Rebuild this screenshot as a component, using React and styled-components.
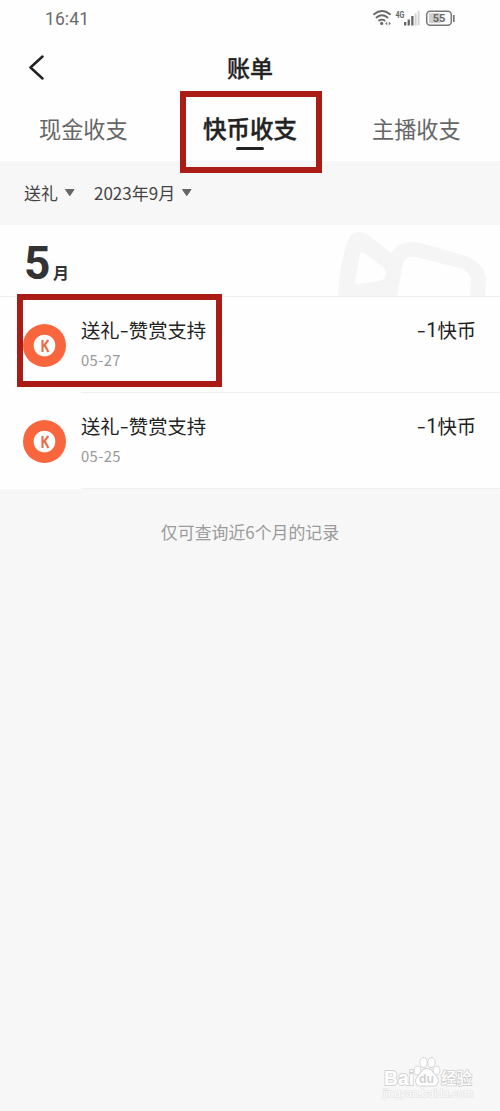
import React from "react";
import styled, { createGlobalStyle } from "styled-components";

const GlobalStyle = createGlobalStyle`
  * { box-sizing: border-box; }
  body { margin: 0; background: #f7f7f7; }
`;

const Screen = styled.div`
  position: relative;
  width: 500px;
  height: 1111px;
  overflow: hidden;
  background: #f7f7f7;
  color: #222;
  font-family: "Noto Sans CJK SC", sans-serif;
  white-space: nowrap;
`;

const StatusBar = styled.div`
  display: flex;
  justify-content: space-between;
  align-items: center;
  height: 38px;
  padding: 0 44px 0 45px;
  background: #fefefe;
`;

const Clock = styled.span`
  font: 400 17.5px/24px Roboto, "Noto Sans", sans-serif;
  letter-spacing: 0.1px;
  color: #6b6b6b;
`;

const NavBar = styled.header`
  display: grid;
  grid-template-columns: 60px 1fr 60px;
  align-items: center;
  height: 59px;
  background: #fefefe;
`;

const BackButton = styled.button`
  display: flex;
  padding: 0 0 0 28px;
  border: 0;
  background: none;
`;

const Title = styled.h1`
  margin: 0;
  padding-bottom: 2px;
  font-size: 23px;
  line-height: 30px;
  font-weight: 500;
  -webkit-text-stroke: 0.3px #222;
  text-align: center;
`;

const Tabs = styled.nav`
  display: flex;
  justify-content: space-between;
  height: 64px;
  padding: 15px 39px 0;
  background: #fefefe;
`;

const Tab = styled.div`
  position: relative;
  width: ${(p) => (p.$active ? "94px" : "89px")};
  font-size: ${(p) => (p.$active ? "23.5px" : "22.2px")};
  line-height: 32px;
  font-weight: ${(p) => (p.$active ? 500 : 400)};
  -webkit-text-stroke: ${(p) => (p.$active ? "0.4px #222" : "0")};
  color: ${(p) => (p.$active ? "#222" : "#666")};
`;

const Underline = styled.span`
  position: absolute;
  left: 33px;
  top: 35px;
  width: 28px;
  height: 3px;
  border-radius: 2px;
  background: #222;
`;

const Filters = styled.div`
  display: flex;
  align-items: center;
  gap: 18px;
  height: 64px;
  padding: 0 24px 0;
`;

const Filter = styled.div`
  display: flex;
  align-items: center;
  gap: 6px;
  font-size: 17px;
  line-height: 24px;
  color: #444;
`;

const Month = styled.div`
  display: flex;
  justify-content: space-between;
  height: 72px;
  padding-left: 24px;
  background: #fefefe;
  border-bottom: 1px solid #eee;
`;

const MonthLabel = styled.div`
  display: flex;
  align-items: baseline;
  gap: 5px;
  height: 71px;
  line-height: 75px;
  font-weight: 700;
  color: #333;
`;

const MonthNumber = styled.span`
  display: inline-block;
  width: 24px;
  font-family: Roboto, sans-serif;
  font-size: 46px;
  line-height: 77px;
`;

const MonthUnit = styled.span`
  padding-bottom: 2px;
  font-size: 16px;
  line-height: 24px;
`;

const Row = styled.article`
  display: flex;
  height: 96px;
  padding-left: 23px;
  background: #fefefe;
`;

const Coin = styled.svg`
  display: block;
  width: 43px;
  height: 43px;
  margin-top: 27px;
  flex: none;
`;

const Detail = styled.div`
  display: flex;
  flex: 1;
  justify-content: space-between;
  margin-left: 15px;
  padding: 19px 24px 0 0;
  border-bottom: 1px solid #f0f0f0;
`;

const Name = styled.div`
  display: flex;
  width: 125px;
  justify-content: space-between;
  font-size: 19.3px;
  line-height: 28px;
`;

const DateText = styled.div`
  margin-top: 6px;
  font-size: 14.8px;
  line-height: 20px;
  letter-spacing: 0.4px;
  color: #999;
`;

const Dash = styled.span`
  display: inline-block;
  transform: translateY(-1px) scaleX(1.35);
`;

const Amount = styled.div`
  display: flex;
  font-size: 19.3px;
  line-height: 28px;
`;

const Digit = styled.span`
  padding-left: 1px;
  font-family: Roboto, sans-serif;
  font-size: 20px;
`;

const Footnote = styled.p`
  margin: 31px 0 0;
  font-size: 16.9px;
  line-height: 24px;
  text-align: center;
  color: #9b9b9b;
`;

const Highlight = styled.div`
  position: absolute;
  left: ${(p) => p.$x}px;
  top: ${(p) => p.$y}px;
  width: ${(p) => p.$w}px;
  height: ${(p) => p.$h}px;
  border: 6px solid #ac1c16;
`;

const Watermark = styled.svg`
  position: absolute;
  left: 380px;
  top: 1052px;
`;

const StatusIcons = () => (
  <svg width="86" height="24" viewBox="370 7 86 24">
    <g fill="none" stroke="#666" strokeWidth="1.9" strokeLinecap="round">
      <path d="M374 14.2Q382 7.8 390 14.2M376.5 17.4Q382 13.2 387.5 17.4M379.2 20.6Q382 18.6 384.6 20.6" />
    </g>
    <circle cx="381.7" cy="23.4" r="1.6" fill="#666" />
    <path d="M387.2 21.4l-2 2 2 2zM388.8 21.4l2 2-2 2z" fill="#777" />
    <text x="395.5" y="17.5" fontSize="8.2" fontWeight="700" fontFamily="Roboto, sans-serif" fill="#666" textLength="9" lengthAdjust="spacingAndGlyphs">4G</text>
    <path d="M404 22h2.3v3.5H404zM407.6 19.5h2.3v6h-2.3zM411.2 16h2.3v9.5h-2.3z" fill="#666" />
    <path d="M414.6 13.5h2v12h-2zM417.7 11h1.8v14.5h-1.8z" fill="#d2d2d2" />
    <rect x="426.7" y="11.2" width="24.6" height="14" rx="3.5" fill="none" stroke="#777" strokeWidth="1.5" />
    <path d="M429 13.2h11.5v10H429z" fill="#d0d0d0" />
    <path d="M453 15h1.7v7H453z" fill="#777" />
    <text x="439" y="22.2" fontSize="11" fontWeight="700" fontFamily="Roboto, sans-serif" fill="#666" textAnchor="middle">55</text>
  </svg>
);

const Caret = () => (
  <svg width="12" height="10" viewBox="0 0 12 10">
    <path d="M1.5 1.5h8.5L5.75 7.7z" fill="#666" stroke="#666" strokeWidth="1" strokeLinejoin="round" />
  </svg>
);

const Camera = () => (
  <svg width="180" height="71" viewBox="320 225 180 71">
    <path
      fill="#f5f5f5"
      fillRule="evenodd"
      d="M338 297Q339 268 347 243Q351 229 364 233Q368 234 373 239L391 253Q399 241 413 242Q419 242 463 255Q484 262 486 279L485 297H470L471 281Q471 273 463 269L416 257Q406 255 403 263L397 297zM360 254Q361 251 364 253L383 267Q388 272 385 277Q384 280 378 281L357 284Q354 285 355 281z"
    />
  </svg>
);

const records = [
  { id: 1, date: "05-27" },
  { id: 2, date: "05-25" },
];

export default function App() {
  return (
    <>
      <GlobalStyle />
      <Screen>
        <StatusBar>
          <Clock>16:41</Clock>
          <StatusIcons />
        </StatusBar>
        <NavBar>
          <BackButton aria-label="返回">
            <svg width="18" height="26" viewBox="0 0 18 26">
              <path d="M14.5 1.5L2.5 12.5L14.5 23.5" fill="none" stroke="#222" strokeWidth="2.5" strokeLinecap="round" strokeLinejoin="round" />
            </svg>
          </BackButton>
          <Title>账单</Title>
        </NavBar>
        <Tabs>
          <Tab>现金收支</Tab>
          <Tab $active>快币收支<Underline /></Tab>
          <Tab>主播收支</Tab>
        </Tabs>
        <Filters>
          <Filter>送礼<Caret /></Filter>
          <Filter>2023年9月<Caret /></Filter>
        </Filters>
        <Month>
          <MonthLabel>
            <MonthNumber>5</MonthNumber>
            <MonthUnit>月</MonthUnit>
          </MonthLabel>
          <Camera />
        </Month>
        {records.map((record) => (
          <Row key={record.id}>
            <Coin viewBox="0 0 43 43">
              <circle cx="21.5" cy="21.5" r="21.5" fill="#f9653c" />
              <circle cx="21.5" cy="21.5" r="10.8" fill="#fff" />
              <path d="M19.5 16v12M25.2 16l-4.8 6.6M21.6 21l3.8 7" fill="none" stroke="#e9704d" strokeWidth="2.2" />
            </Coin>
            <Detail>
              <div>
                <Name><span>送礼</span><Dash>-</Dash><span>赞赏支持</span></Name>
                <DateText>{record.date}</DateText>
              </div>
              <Amount><Dash>-</Dash><Digit>1</Digit>快币</Amount>
            </Detail>
          </Row>
        ))}
        <Footnote>仅可查询近6个月的记录</Footnote>
        <Highlight $x={180} $y={91} $w={142} $h={82} />
        <Highlight $x={17} $y={294} $w={205} $h={93} />
        <Watermark width="100" height="52" viewBox="380 1052 100 52">
          <g fill="#fff" stroke="#d2d2d2" strokeWidth="1.8" paintOrder="stroke" strokeLinejoin="round">
            <text x="384" y="1085" fontSize="20" fontWeight="700" fontFamily="Liberation Sans, sans-serif" textLength="30" lengthAdjust="spacingAndGlyphs">Bai</text>
            <ellipse cx="417.5" cy="1070.5" rx="3" ry="4" />
            <ellipse cx="423.5" cy="1062.5" rx="3.2" ry="4.5" />
            <ellipse cx="431.5" cy="1062.5" rx="3.2" ry="4.5" />
            <ellipse cx="436.5" cy="1070.5" rx="3" ry="4" />
            <path d="M427 1069Q431 1069 433 1073Q438 1077 438 1081Q437 1087 431 1085.5H422Q416 1087 416 1080Q417 1077 421 1073Q423 1069 427 1069z" />
            <text x="441" y="1084" fontSize="15.5" fontWeight="500" fontFamily="Noto Sans CJK SC, sans-serif">经验</text>
          </g>
          <text x="419" y="1083" fontSize="13" fontWeight="700" fontFamily="Liberation Sans, sans-serif" fill="#d2d2d2" textLength="15" lengthAdjust="spacingAndGlyphs">du</text>
          <text x="383" y="1097" fontSize="10.5" fontFamily="Liberation Sans, sans-serif" fill="#fff" stroke="#e2e2e2" strokeWidth="1.2" paintOrder="stroke" textLength="90" lengthAdjust="spacingAndGlyphs">jingyan.baidu.com</text>
        </Watermark>
      </Screen>
    </>
  );
}
